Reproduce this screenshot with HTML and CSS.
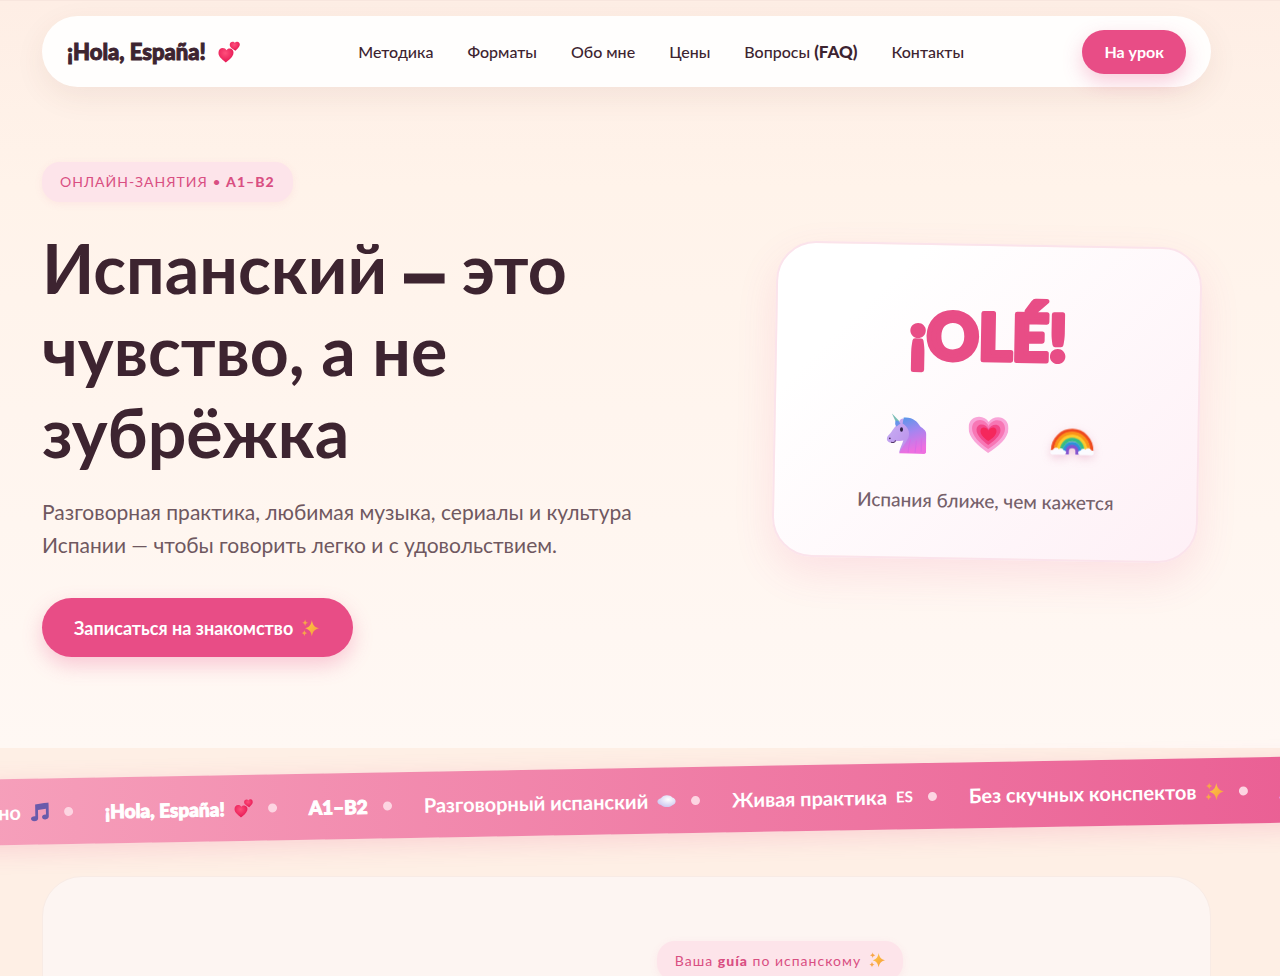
FILE: index.html
```html
<!DOCTYPE html>
<html lang="ru">
<head>
    <meta charset="UTF-8">
    <meta name="viewport" content="width=device-width, initial-scale=1.0">
    <title>¡Hola, España!</title>
    <link rel="stylesheet" href="styles.css">
</head>
<body>
    <!-- icon set -->
    <svg class="sprite" aria-hidden="true">
        <defs>
            <radialGradient id="g-heart" cx="0.45" cy="0.35" r="0.7">
                <stop offset="0" stop-color="#ff4f7c"/>
                <stop offset="1" stop-color="#e3124f"/>
            </radialGradient>
            <linearGradient id="g-spark" x1="0" y1="0" x2="1" y2="1">
                <stop offset="0" stop-color="#ffcb45"/>
                <stop offset="1" stop-color="#f59a3c"/>
            </linearGradient>
            <linearGradient id="g-mane" x1="0" y1="0" x2="0.3" y2="1">
                <stop offset="0" stop-color="#4a9be8"/>
                <stop offset="0.5" stop-color="#a585f0"/>
                <stop offset="1" stop-color="#ee6fe0"/>
            </linearGradient>
            <linearGradient id="g-face" x1="0" y1="0" x2="1" y2="1">
                <stop offset="0" stop-color="#c9b2f5"/>
                <stop offset="1" stop-color="#b98be8"/>
            </linearGradient>
            <radialGradient id="g-cloud" cx="0.6" cy="0.35" r="0.7">
                <stop offset="0" stop-color="#ffffff"/>
                <stop offset="1" stop-color="#c9c4ee"/>
            </radialGradient>
        </defs>
        <symbol id="hearts" viewBox="0 0 24 24">
            <path fill="url(#g-heart)" d="M8.500 23.500C5.500 20.500.5 17.500.5 13c0-3.200 2-5.300 4.700-5.300 1.800 0 3.200.9 4 2.300 1-1.400 2.500-2 4.200-1.700 3 .6 4.200 3.500 3.200 6.400-1.400 3.800-5.100 6.300-8.100 8.800z"/>
            <path fill="url(#g-heart)" d="M19 10.500C17 9 13 7.500 12.800 4.300 12.700 2.200 14.200.7 16 .7c1.100 0 1.900.5 2.400 1.300.6-1 1.500-1.400 2.600-1.300 2 .2 3.100 2 2.700 4C23.100 7.200 20.800 9 19 10.500z"/>
        </symbol>
        <symbol id="sparkles" viewBox="0 0 24 24">
            <path fill="url(#g-spark)" d="M14.500 1.500c1.200 6.300 3 9 9.500 10.800-6.500 1.800-8.300 4.500-9.500 10.700-1.200-6.200-3-8.900-9-10.700 6-1.800 7.800-4.500 9-10.800z"/>
            <path fill="#f7a64a" d="M5.500.5c.5 2.800 1.300 3.700 4 4.500-2.700.8-3.500 1.700-4 4.500C5 6.700 4.200 5.800 1.500 5c2.700-.8 3.500-1.700 4-4.500zM4.500 14.500c.5 2.600 1.300 3.500 3.800 4.300-2.500.8-3.300 1.600-3.800 4.200-.5-2.600-1.300-3.400-3.900-4.200 2.600-.8 3.400-1.700 3.900-4.300z"/>
        </symbol>
        <symbol id="notes" viewBox="0 0 24 24">
            <path fill="#6a5bab" d="M6.500 2.500 23.500 0v18c0 2-1.800 3.500-4.500 3.500s-4-1.200-4-3 2-3.400 5-3V8L10 9.500V20c0 2.200-2 3.800-4.800 3.800-2.400 0-4.200-1.300-4.200-3.300 0-2.200 2.200-3.500 5.500-3.200z"/>
        </symbol>
        <symbol id="cloud" viewBox="0 0 24 24">
            <path fill="url(#g-cloud)" d="M.5 12.500c0-2 2-3.700 4.500-4.200C6.800 6 9.300 4.800 12.500 4.800c3 0 5.500 1 7 2.900 2.500.7 4 2.500 4 4.800s-1.700 4.100-4.200 4.900c-1.700 1.500-4.200 2.300-7 2.300-3.200 0-5.800-1-7.300-2.700C2.300 16.300.5 14.700.5 12.500z"/>
        </symbol>
        <symbol id="unicorn" viewBox="0 0 40 40">
            <path fill="#79bdb5" d="M5 0 14 9l-3.500 2z"/>
            <path fill="url(#g-face)" d="M12 11c0-3 2-6 4-6 2 1 3 3 3 5l7 8v21H13c1-5 3-8 4-12-3 1-6 0-8 1-3 1.500-6 2-8-.5-1-2-.5-4 1.500-6C6 18 8 12 12 11z"/>
            <path fill="url(#g-mane)" d="M9 7c3 0 4 2 5 3l-4 3c-1-1-2-2-1-6zM17 4c9-1 14 4 17 9 3 2 6 4 6 8v17c0 1-1 2-2 2H13c2-6 7-11 9-16 2-6-1-11-6-14z"/>
            <path fill="none" stroke="#d86be6" stroke-width="1" d="M24 26c-1 5-2 9-2 13M30 27c0 4-1 8-1 12M35 25v13"/>
            <ellipse cx="15" cy="16" rx="1.500" ry="2.300" fill="#2e2145"/>
            <circle cx="3.500" cy="25" r="0.900" fill="#53346b"/>
            <path fill="none" stroke="#53346b" stroke-linecap="round" d="M5 29c2 .5 4 0 4-2"/>
        </symbol>
        <symbol id="heart" viewBox="0 0 40 40">
            <path fill="#f9a5d8" d="M20 38C10 31 0 23 0 13 0 6 5 2 10.500 2c4 0 7.500 2 9.500 5 2-3 5.500-5 9.500-5C35 2 40 6 40 13c0 10-10 18-20 25z"/>
            <path fill="#f777b5" d="M20 34C11 28 3.500 21 3.500 13.500 3.500 8 7 5 11.500 5c3.500 0 7 2.500 8.500 6 1.500-3.500 5-6 8.500-6 4.500 0 8 3 8 8.500C36.500 21 29 28 20 34z"/>
            <path fill="#f2478a" d="M20 30C13.500 25.500 8 20 8 15c0-3.500 2.300-5.500 5-5.500 3 0 5.500 1.700 7 4.500 1.500-2.800 4-4.500 7-4.500 2.700 0 5 2 5 5.500 0 5-5.500 10.500-12 15z"/>
            <path fill="#f5275c" d="M20 26c-4.500-3-8-6.500-8-10 0-2.300 1.500-3.500 3.200-3.500 2 0 3.800 1.200 4.800 3 1-1.800 2.800-3 4.800-3 1.700 0 3.200 1.200 3.200 3.500 0 3.500-3.500 7-8 10z"/>
        </symbol>
        <symbol id="rainbow" viewBox="0 0 44 40">
            <g fill="none" stroke-width="3.400">
                <path stroke="#ee4a1f" d="M2.500 34a19.500 20 0 0 1 39 0"/>
                <path stroke="#fb9417" d="M5.500 34a16.500 17 0 0 1 33 0"/>
                <path stroke="#fccb2c" d="M8.500 34a13.500 14 0 0 1 27 0"/>
                <path stroke="#35bd84" d="M11.500 34a10.500 11 0 0 1 21 0"/>
                <path stroke="#2a93d8" d="M14 36a8 9 0 0 1 16 0"/>
                <path stroke="#8353cf" d="M17 38v-3a5 5 0 0 1 10 0v3"/>
            </g>
            <path fill="#fbfbff" d="M2 38.500c-2.500-.5-2.500-5 1-5 1-2.500 4.500-2.500 5.500-.5 2-2 4.500-1 5 1 3.500 0 3 4 .5 4.500zM30 38.500c-2.500-.5-3-4.500.5-4.500.5-2 3-3 5-1 1-2 4.500-2 5.500.5 3.500 0 3.500 4.500 1 5z"/>
        </symbol>
    </svg>

    <section class="hero">
        <header class="header">
            <a class="logo" href="#">¡Hola, España! <svg class="icon"><use href="#hearts"/></svg></a>
            <nav class="nav">
                <a href="#method">Методика</a>
                <a href="#formats">Форматы</a>
                <a href="#about">Обо мне</a>
                <a href="#prices">Цены</a>
                <a href="#faq">Вопросы <b>(FAQ)</b></a>
                <a href="#contacts">Контакты</a>
            </nav>
            <button class="btn btn-small" type="button">На урок</button>
        </header>

        <div class="hero-grid">
            <div class="hero-text">
                <span class="pill pill-upper"><span>Онлайн-занятия • <b>A1–B2</b></span></span>
                <h1>Испанский <span class="dash">—</span> это чувство, а не зубрёжка</h1>
                <p>Разговорная практика, любимая музыка, сериалы и культура Испании — чтобы говорить легко и с удовольствием.</p>
                <button class="btn btn-big" type="button">Записаться на знакомство <svg class="icon"><use href="#sparkles"/></svg></button>
            </div>
            <div class="card">
                <svg class="ole" viewBox="0 0 180 90" role="img" aria-label="¡OLÉ!">
                    <text x="90" y="66" text-anchor="middle">¡OLÉ!</text>
                </svg>
                <div class="card-icons">
                    <svg><use href="#unicorn"/></svg>
                    <svg><use href="#heart"/></svg>
                    <svg class="rainbow"><use href="#rainbow"/></svg>
                </div>
                <div class="card-caption">Испания ближе, чем кажется</div>
            </div>
        </div>
    </section>

    <div class="marquee">
        <div class="marquee-track">
            <span>Музыка и кино <svg class="icon"><use href="#notes"/></svg></span>
            <span><b>¡Hola, España!</b> <svg class="icon"><use href="#hearts"/></svg></span>
            <span><b>A1–B2</b></span>
            <span>Разговорный испанский <svg class="icon"><use href="#cloud"/></svg></span>
            <span>Живая практика <small>ES</small></span>
            <span>Без скучных конспектов <svg class="icon"><use href="#sparkles"/></svg></span>
            <span><b>A1–B2</b></span>
        </div>
    </div>

    <section class="about" id="about">
        <span class="pill"><span>Ваша <b>guía</b> по испанскому</span> <svg class="icon"><use href="#sparkles"/></svg></span>
    </section>
</body>
</html>
```
FILE: styles.css
```css
* { box-sizing: border-box; }
body { margin: 0; background: #feefe5; color: #3d2430; font-family: "Lato", "Open Sans", sans-serif; font-size: 16px; overflow-x: hidden; }
a { color: inherit; text-decoration: none; }
b { font-weight: 900; }
.sprite { position: absolute; width: 0; height: 0; }
.icon { width: 1em; height: 1em; flex: none; }

.hero { padding: 15px 69px 91px 42px; border-top: 1px solid #f8e6de; background: linear-gradient(#feeee5, #fff3ea 25%, #fff8f4); }

.header { display: flex; justify-content: space-between; align-items: center; height: 71px; padding: 0 25px; border-radius: 36px; background: #fffefd; box-shadow: 0 10px 30px rgba(120, 60, 50, 0.08); }
.logo { display: flex; align-items: center; gap: 12px; font-size: 22px; font-weight: 900; -webkit-text-stroke: 1px; }
.logo .icon { width: 22px; height: 22px; }
.nav { display: flex; align-items: baseline; gap: 34px; font-weight: 500; }
.nav b { font-size: 17px; }

.btn { display: inline-flex; align-items: center; justify-content: center; gap: 8px; border: 0; border-radius: 30px; background: #e84d86; color: #fff; font-family: inherit; font-weight: 700; cursor: pointer; box-shadow: 0 8px 20px rgba(232, 77, 134, 0.28); }
.btn-small { height: 44px; padding: 0 22px; font-size: 16px; }
.btn-big { height: 59px; padding: 0 34px 0 32px; font-size: 18px; }
.btn-big .icon { width: 18px; height: 18px; }

.hero-grid { display: grid; grid-template-columns: minmax(0, 600px) 448px; justify-content: space-between; align-items: center; padding-top: 75px; }
.pill { display: inline-flex; align-items: center; gap: 8px; height: 40px; padding: 0 18px 2px; border-radius: 18px; background: #fde4ea; color: #d94f82; font-size: 14px; letter-spacing: 1px; box-shadow: 0 2px 8px rgba(232, 77, 134, 0.08); }
.pill .icon { width: 16px; height: 16px; }
.pill-upper { text-transform: uppercase; }
.hero h1 { margin: 25px 0 22px; font-size: 68px; font-weight: 700; line-height: 82px; }
.dash { font-size: 52px; font-weight: 900; line-height: 1; -webkit-text-stroke: 5px; }
.hero p { margin: 0 0 37px; color: #6f5860; font-size: 21px; line-height: 33px; }

.card { display: flex; flex-direction: column; align-items: center; justify-self: center; width: 426px; height: 316px; margin-bottom: 16px; padding-top: 48px; border: 2px solid #fbe3eb; border-radius: 40px; background: linear-gradient(135deg, #fff 20%, #fef0f6); box-shadow: 0 16px 40px rgba(232, 77, 134, 0.12); transform: rotate(1deg); }
.ole { width: 180px; height: 90px; overflow: visible; }
.ole text { fill: #e84d86; stroke: #e84d86; stroke-width: 5px; stroke-linejoin: round; font-size: 64px; font-weight: 900; }
.card-icons { display: flex; gap: 42px; margin-top: 31px; padding-left: 8px; }
.card-icons svg { width: 40px; height: 40px; }
.card-icons .rainbow { width: 44px; filter: drop-shadow(0 3px 4px rgba(200, 80, 130, 0.25)); }
.card-caption { margin-top: 34px; color: #75606a; font-size: 19px; font-weight: 500; }

.marquee { width: 104%; height: 66px; margin: 20px -2% 42px; overflow: hidden; background: linear-gradient(90deg, #f6a0bb, #ea5f94); box-shadow: 0 6px 24px rgba(232, 77, 134, 0.18); transform: rotate(-1deg); }
.marquee-track { display: flex; align-items: center; width: max-content; height: 100%; margin-left: -94px; color: #fff; font-size: 20px; font-weight: 700; }
.marquee-track span { display: flex; align-items: center; gap: 9px; margin-right: 32px; white-space: nowrap; }
.marquee-track span::after { content: ""; width: 9px; height: 9px; margin-left: 6px; border-radius: 50%; background: #fdd5e2; }
.marquee-track b { font-size: 19px; -webkit-text-stroke: 1px; }
.marquee-track small { font-size: 15px; }
.marquee-track .icon { width: 19px; height: 19px; }

.about { display: flex; justify-content: center; align-items: flex-start; min-height: 600px; margin: 0 69px 0 42px; padding: 64px 0 0 307px; border: 1px solid #f8ebe5; border-radius: 40px; background: #fdf5f2; }
```
